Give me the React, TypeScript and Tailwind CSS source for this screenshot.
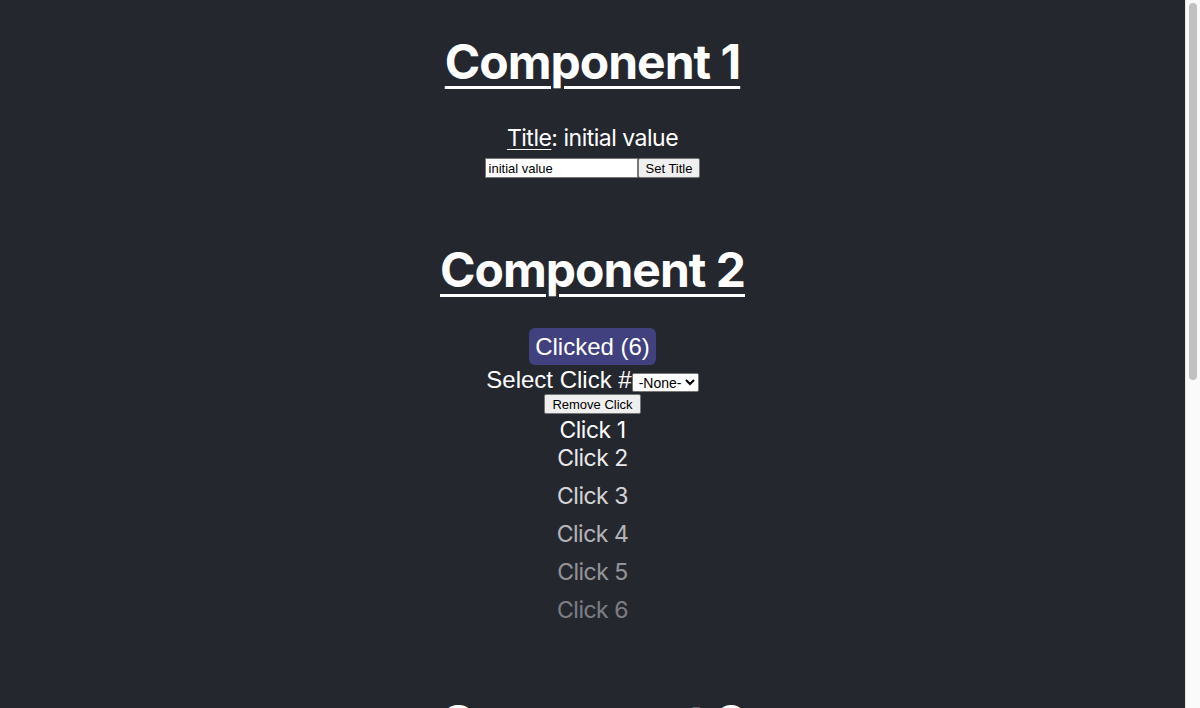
import React, { useState } from 'react';

const sans = { fontFamily: 'Inter, "Noto Sans", sans-serif' };
const arial = { fontFamily: '"Liberation Sans", Arial, sans-serif' };

const Heading: React.FC<{ children: React.ReactNode }> = ({ children }) => (
  <h1 className="text-[48px] font-bold leading-[58px] tracking-[-1px] underline decoration-[3px] underline-offset-[7px] text-white">
    {children}
  </h1>
);

const App: React.FC = () => {
  const [input, setInput] = useState('initial value');
  const [title, setTitle] = useState('initial value');
  const [clicks, setClicks] = useState<number[]>([1, 2, 3, 4, 5, 6]);
  const [selected, setSelected] = useState('');

  const opacities = ['opacity-100', 'opacity-90', 'opacity-80', 'opacity-65', 'opacity-50', 'opacity-40'];
  const gaps = ['mt-0', 'mt-0', 'mt-[10px]', 'mt-[10px]', 'mt-[10px]', 'mt-[10px]'];

  return (
    <div className="flex h-[708px] overflow-hidden bg-[#25272f]">
      <main className="flex-1 min-w-0 overflow-hidden">
        <div className="text-white flex flex-col items-center pt-[33px] pb-[400px]" style={sans}>
          <Heading>Component 1</Heading>
          <p className="mt-[32px] text-[23px] leading-[30px] tracking-[-0.5px]">
            <span className="underline decoration-1 underline-offset-[3px]">Title</span>: {title}
          </p>
          <div className="flex mt-[5px]" style={arial}>
            <input
              value={input}
              onChange={e => setInput(e.target.value)}
              className="w-[153px] h-[20px] bg-white text-black text-[13px] px-[3px] border border-[#767676] outline-none"
            />
            <button
              onClick={() => setTitle(input)}
              className="h-[20px] px-[7px] bg-[#efefef] text-black text-[13px] border border-[#767676] rounded-[2px]"
            >
              Set Title
            </button>
          </div>

          <div className="mt-[63px]">
            <Heading>Component 2</Heading>
          </div>
          <button
            onClick={() => setClicks(c => [...c, c.length + 1])}
            className="mt-[29px] h-[37px] px-[6px] bg-[#41417f] text-white text-[24px] rounded-[6px]"
            style={arial}
          >
            Clicked ({clicks.length})
          </button>
          <div className="flex items-center mt-[1px]" style={arial}>
            <span className="text-[24px] leading-[28px]">Select Click #</span>
            <select
              value={selected}
              onChange={e => setSelected(e.target.value)}
              className="mt-[4px] h-[19px] bg-white text-black text-[14px] border border-[#767676] rounded-[2px] pl-[2px]"
            >
              <option value="">-None-</option>
              {clicks.map(c => (
                <option key={c} value={String(c)}>{c}</option>
              ))}
            </select>
          </div>
          <button
            onClick={() => selected && setClicks(c => c.filter(x => String(x) !== selected))}
            className="mt-0 h-[20px] px-[7px] bg-[#efefef] text-black text-[13px] border border-[#767676] rounded-[2px]"
            style={arial}
          >
            Remove Click
          </button>
          <div className="flex flex-col items-center mt-[2px]">
            {clicks.map((c, i) => (
              <div
                key={c}
                className={`text-[23px] leading-[28px] tracking-[-0.5px] ${gaps[i] ?? 'mt-[10px]'} ${opacities[i] ?? 'opacity-40'}`}
              >
                Click {c}
              </div>
            ))}
          </div>

          <div className="mt-[70px]">
            <Heading>Component 3</Heading>
          </div>
          <p className="mt-[32px] text-[23px] leading-[30px]">Content</p>
        </div>
      </main>

      {/* page scrollbar */}
      <div className="w-[15px] shrink-0 bg-[#fafafa] border-l border-[#e6e6e6] pt-[3px] px-[3px]">
        <div className="h-[377px] rounded-full bg-[#c1c1c1]" />
      </div>
    </div>
  );
};

export default App;
